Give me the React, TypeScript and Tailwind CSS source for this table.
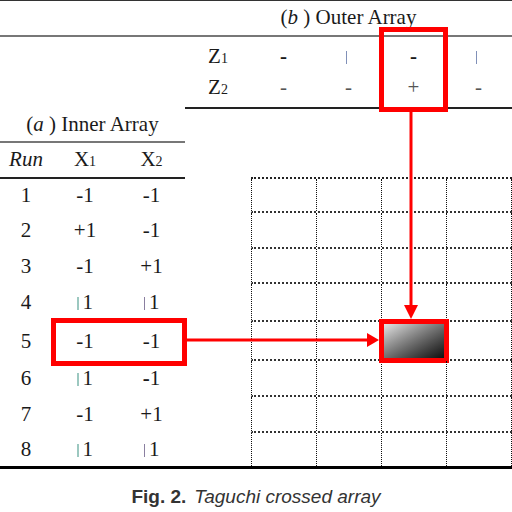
const Bar = ({ c }: { c: string }) => (
  <span className={`inline-block w-[1.5px] h-[13px] mr-[4px] align-[-1px] ${c}`} />
);

const rows = [
  { run: "1", x1: <>-1</>, x2: <>-1</>, h: "h-[34px]" },
  { run: "2", x1: <>+1</>, x2: <>-1</>, h: "h-[36px]" },
  { run: "3", x1: <>-1</>, x2: <>+1</>, h: "h-[35px]" },
  { run: "4", x1: <><Bar c="bg-[#9cc8c0]" />1</>, x2: <><Bar c="bg-[#8a7fa0]" />1</>, h: "h-[38px]" },
  { run: "5", x1: <>-1</>, x2: <>-1</>, h: "h-[39px]" },
  { run: "6", x1: <><Bar c="bg-[#9cc8c0]" />1</>, x2: <><b>-</b>1</>, h: "h-[36px]" },
  { run: "7", x1: <>-1</>, x2: <>+1</>, h: "h-[36px]" },
  { run: "8", x1: <><Bar c="bg-[#9cc8c0]" />1</>, x2: <><Bar c="bg-[#8a7fa0]" />1</>, h: "h-[33px]" },
];

const cell = "w-[65px] border-r border-dotted border-[#111]";

export default function App() {
  return (
    <div className="relative w-[512px] h-[512px] bg-white overflow-hidden font-['Liberation_Serif',serif] text-[21px] text-[#1a1a1a]">
      {/* outer array title */}
      <div className="flex h-[35px] border-t border-[#333]">
        <div className="w-[185px]" />
        <div className="flex-1 flex items-center justify-center">
          (<i>b</i>&nbsp;) Outer Array
        </div>
      </div>
      <div className="h-[2px] bg-[#777]" />

      {/* Z rows */}
      <div className="flex">
        <div className="w-[185px]" />
        <div className="flex-1 pt-[4px] pb-[4px] border-b-2 border-[#222]">
          <div className="flex h-[31px] items-center">
            <div className="w-[66px] text-center">Z<span className="text-[14px]">1</span></div>
            <div className="w-[65px] text-center font-bold">-</div>
            <div className="w-[65px] text-center"><Bar c="bg-[#8090b8] mr-0" /></div>
            <div className="w-[65px] text-center font-bold">-</div>
            <div className="w-[65px] text-center"><Bar c="bg-[#8090b8] mr-0" /></div>
          </div>
          <div className="flex h-[31px] items-center text-[#555]">
            <div className="w-[66px] text-center text-[#1a1a1a]">Z<span className="text-[14px]">2</span></div>
            <div className="w-[65px] text-center">-</div>
            <div className="w-[65px] text-center">-</div>
            <div className="w-[65px] text-center">+</div>
            <div className="w-[65px] text-center">-</div>
          </div>
        </div>
      </div>

      {/* inner array header */}
      <div className="flex">
        <div className="w-[185px]">
          <div className="h-[32px] flex items-center justify-center">
            (<i>a</i>&nbsp;) Inner Array
          </div>
          <div className="h-[2px] bg-[#777]" />
          <div className="h-[34px] flex items-center">
            <div className="w-[52px] text-center italic">Run</div>
            <div className="w-[66px] text-center">X<span className="text-[14px]">1</span></div>
            <div className="w-[67px] text-center">X<span className="text-[14px]">2</span></div>
          </div>
          <div className="h-[2px] bg-[#222]" />
        </div>
        <div className="flex-1 flex items-end">
          <div className="ml-[66px] w-[261px] h-[2px] border-b-2 border-dotted border-[#222]" />
        </div>
      </div>

      {/* body rows with dotted grid */}
      <div>
        {rows.map((r, i) => (
          <div key={r.run} className={`flex ${r.h}`}>
            <div className="w-[185px] flex items-center">
              <div className="w-[52px] text-center">{r.run}</div>
              <div className="w-[66px] text-center">{r.x1}</div>
              <div className="w-[67px] text-center">{r.x2}</div>
            </div>
            <div className="w-[66px]" />
            <div
              className={`flex border-l border-dotted border-[#111] ${
                i < rows.length - 1 ? "border-b-2 border-b-[#333]" : ""
              }`}
            >
              <div className={cell} />
              <div className={cell} />
              <div className={`${cell} relative`}>
                {r.run === "5" && (
                  <div className="absolute -left-[3px] -top-[3px] w-[70px] h-[44px] border-[5px] border-[#ff0000] bg-linear-to-br from-[#e6e6e6] to-[#111]" />
                )}
              </div>
              <div className={cell} />
            </div>
          </div>
        ))}
      </div>
      <div className="h-[3px] bg-black" />

      {/* caption */}
      <div className="flex justify-center pt-[14px] font-['Liberation_Sans',sans-serif] text-[19px] text-[#333]">
        <span className="font-bold">Fig. 2.</span>
        <span className="italic ml-[8px]">Taguchi crossed array</span>
      </div>

      {/* highlight boxes and arrows */}
      <div className="absolute left-[379px] top-[27px] w-[69px] h-[85px] border-[5px] border-[#ff0000]" />
      <div className="absolute left-[51px] top-[318px] w-[136px] h-[48px] border-[5px] border-[#ff0000]" />
      <svg className="absolute left-0 top-0 pointer-events-none" width="512" height="512">
        <line x1="411" y1="112" x2="411" y2="306" stroke="#ff0000" strokeWidth="3" />
        <polygon points="404,305 418,305 411,319" fill="#ff0000" />
        <line x1="187" y1="340" x2="368" y2="340" stroke="#ff0000" strokeWidth="3" />
        <polygon points="367,333 379,340 367,347" fill="#ff0000" />
      </svg>
    </div>
  );
}
